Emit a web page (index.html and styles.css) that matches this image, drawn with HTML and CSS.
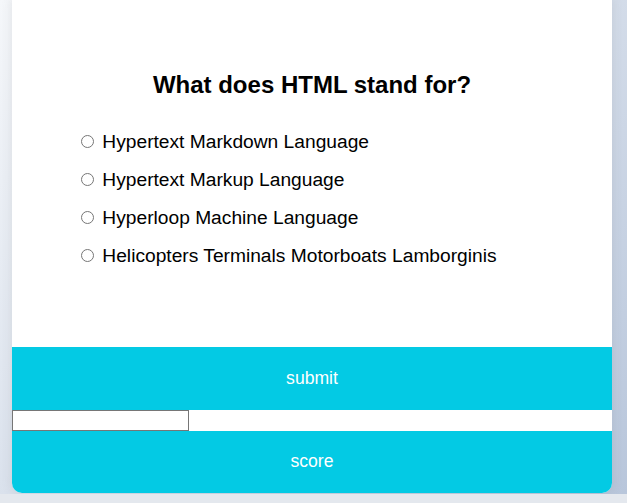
FILE: index.html
```html
<!DOCTYPE html>
<html lang="en">
<head>
<meta charset="utf-8">
<title>Quiz</title>
<link rel="stylesheet" href="styles.css">
</head>
<body>
<div class="quiz-container">
  <div class="quiz-header">
    <h2 class="question">What does HTML stand for?</h2>
    <ul class="answers">
      <li><input type="radio" name="answer" id="a"> <label for="a">Hypertext Markdown Language</label></li>
      <li><input type="radio" name="answer" id="b"> <label for="b">Hypertext Markup Language</label></li>
      <li><input type="radio" name="answer" id="c"> <label for="c">Hyperloop Machine Language</label></li>
      <li><input type="radio" name="answer" id="d"> <label for="d">Helicopters Terminals Motorboats Lamborginis</label></li>
    </ul>
  </div>
  <button class="btn">submit</button>
  <input type="text" class="score-input">
  <button class="btn">score</button>
</div>
</body>
</html>
```
FILE: styles.css
```css
html {
  background: #e4e8ee;
}
body {
  margin: 0;
  padding: 0 0 1px 12px;
  background-color: #b8c6db;
  background-image: linear-gradient(315deg, #b8c6db 0%, #f5f7fa 100%);
  font-family: "Liberation Sans", Arial, sans-serif;
}
.quiz-container {
  background: #fff;
  width: 600px;
  border-radius: 0 0 10px 10px;
  box-shadow: 0 0 10px 2px rgba(100, 100, 100, 0.1);
  overflow: hidden;
}
.quiz-header {
  padding: 55px 64px 64px;
}
.question {
  margin: 0;
  padding: 16px;
  text-align: center;
  font-size: 24px;
  color: #000;
}
.answers {
  list-style: none;
  padding: 0;
  margin: 16px 0;
}
.answers li {
  font-size: 19.2px;
  margin: 16px 0;
}
.btn {
  display: block;
  width: 100%;
  border: none;
  background-color: #03cae4;
  color: #fff;
  font-family: inherit;
  font-size: 17.6px;
  padding: 20.8px;
  margin: 0;
}
.score-input {
  display: block;
  box-sizing: border-box;
  width: 177px;
  height: 21px;
  margin: 0;
  padding: 1px 2px;
  border: 1px solid #767676;
  background: #fff;
}
```
